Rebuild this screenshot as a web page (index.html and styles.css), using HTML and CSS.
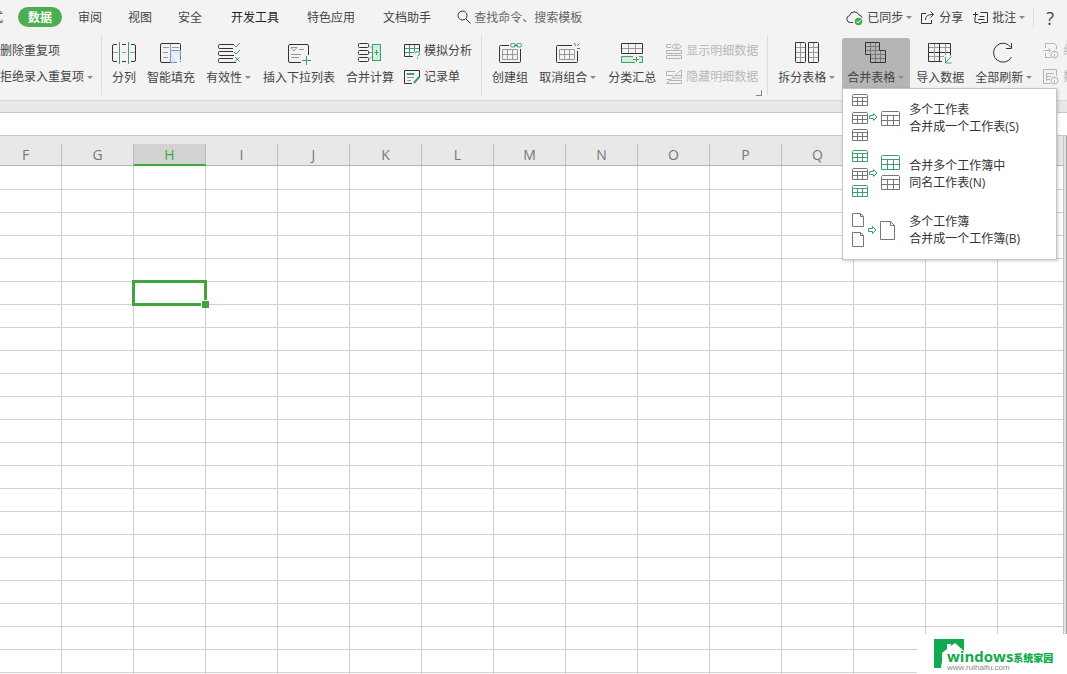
FILE: index.html
```html
<!DOCTYPE html>
<html lang="zh-CN">
<head>
<meta charset="utf-8">
<title>表格 - 数据</title>
<link rel="stylesheet" href="styles.css">
</head>
<body>
<svg class="defs" aria-hidden="true">
  <symbol id="grid-s" viewBox="0 0 16 12"><path d="M.5 1.500q0-1 1-1h13q1 0 1 1v10H.5zM.5 3.500h15M.5 7.500h15M5.500 3.500v8M10.500 3.500v8"/></symbol>
  <symbol id="grid-l" viewBox="0 0 19 15"><path d="M.5 1.500q0-1 1-1h16q1 0 1 1v13H.5zM.5 4.500h18M.5 9.500h18M6.500 4.500v10M12.500 4.500v10"/></symbol>
  <symbol id="arrow" viewBox="0 0 9 8"><path d="M.5 2.500h4v-2L8 4 4.500 7.500v-2h-4z"/></symbol>
</svg>
<div class="app">
  <header class="menubar">
    <nav class="tabs">
      <button class="tab">式</button>
      <button class="tab current">数据</button>
      <button class="tab">审阅</button>
      <button class="tab">视图</button>
      <button class="tab">安全</button>
      <button class="tab wide dev">开发工具</button>
      <button class="tab wide">特色应用</button>
      <button class="tab wide">文档助手</button>
    </nav>
    <label class="search">
      <svg width="14" height="14" viewBox="0 0 14 14"><circle cx="5.500" cy="5.500" r="4.500"/><path d="M9 9l4.500 4.500"/></svg>
      <input type="text" placeholder="查找命令、搜索模板" aria-label="查找命令">
    </label>
    <div class="account">
      <button class="link"><svg width="18" height="16" viewBox="0 0 18 16"><path d="M7 12.500H4.500A3.500 3.500 0 0 1 3.500 5.600 5 5 0 0 1 13 5a3.600 3.600 0 0 1 3 2.500"/><circle class="ok" cx="12.500" cy="11.500" r="3.800"/><path class="tick" d="M10.500 11.500l1.500 1.500 2.500-3"/></svg><span>已同步</span><i class="caret"></i></button>
      <button class="link share"><svg width="15" height="14" viewBox="0 0 15 14"><path d="M6 2.500H1.500v10h10V9M5.500 9C5.500 5 8 3.500 13 3.500M10.500.5l3 3-3 3"/></svg><span>分享</span></button>
      <button class="link"><svg width="16" height="14" viewBox="0 0 16 14"><path d="M7.500 1.500h7v10h-6l-1.500 1.500-1.500-1.500h-3.500V6M0 3.500h5M2.500 1v5M6.500 5.500h5M5 8.500h6.500"/></svg><span>批注</span><i class="caret"></i></button>
      <i class="divider"></i>
      <button class="help" aria-label="帮助">?</button>
    </div>
  </header>

  <div class="ribbon">
    <div class="stack first">
      <button class="small">删除重复项</button>
      <button class="small">拒绝录入重复项<i class="caret"></i></button>
    </div>
    <i class="rule"></i>
    <button class="large">
      <svg viewBox="0 0 24 24"><path d="M5 3.500H2q-1.500 0-1.500 1.500v14q0 1.500 1.500 1.500h3M19 3.500h3q1.500 0 1.500 1.500v14q0 1.500-1.500 1.500h-3M10 3.500h4M10 20.500h4"/><path class="thin" d="M1 11.500h5M10 11.500h4M18 11.500h5"/><path class="green" d="M7.500 1v22M16.500 1v22"/></svg>
      <span>分列</span>
    </button>
    <button class="large">
      <svg viewBox="0 0 24 24"><path d="M11.500 21.500H3q-1.500 0-1.500-1.500V4q0-1.500 1.500-1.500h17.500q1 0 1 1.500v5"/><path class="thin" d="M11.500 3v6M4 6.500h6M13 6.500h7M4 11.500h5M4 16.500h5"/><path class="bluefill" d="M11.500 9.500h10v8M18 21.500h-6.500v-12"/><path class="blue" d="M21.500 16v3M21.500 20v1"/></svg>
      <span>智能填充</span>
    </button>
    <button class="large">
      <svg viewBox="0 0 24 24"><path d="M17 3.500H2.500q-1 0-1 1v2q0 1 1 1H16M16 10.500H2.500q-1 0-1 1v2q0 1 1 1H17M16 17.500H2.500q-1 0-1 1v2q0 1 1 1H19"/><path class="green" d="M17 4l2 2 4-4M17 11l2 2 4-4M18 16l4.500 4.500M22.500 16L18 20.500"/></svg>
      <span>有效性<i class="caret"></i></span>
    </button>
    <button class="large">
      <svg viewBox="0 0 24 24"><path d="M14 21.500H3q-1.500 0-1.500-1.500V5q0-1.500 1.500-1.500h17q1.500 0 1.500 1.500v9"/><path class="thin" d="M4 6.500h6L7 10zM12 8.500h5M4 13.500h10M4 16.500h8"/><path class="green" d="M15 19.500h9M19.500 15v9"/></svg>
      <span>插入下拉列表</span>
    </button>
    <button class="large">
      <svg viewBox="0 0 24 24"><rect x=".5" y="2.500" width="10" height="4" rx="1"/><rect x=".5" y="9.500" width="10" height="4" rx="1"/><rect x=".5" y="16.500" width="10" height="4" rx="1"/><path class="thin" d="M11 4.500l3 3M11 11.500h3M11 18.500l3-3"/><rect class="mint" x="14.500" y="3.500" width="8" height="16"/><path class="green" d="M16.500 11.500h4M18.500 9v5"/></svg>
      <span>合并计算</span>
    </button>
    <div class="stack">
      <button class="small"><svg viewBox="0 0 16 16"><path d="M9 13.500H.5v-12h15v7"/><path class="green" d="M1 5.500h14M1 9.500h9M5.500 2v11M10.500 2v7M11.500 10.500q0-2 2-2t2 2-2 2.500M13.500 14.500v1"/></svg>模拟分析</button>
      <button class="small"><svg viewBox="0 0 16 16"><path d="M8 14.500H.5v-13h15v7"/><path class="green" d="M3 4.500h7v1H3z"/><path class="thin" d="M3 8.500h7M3 11.500h4"/><path class="green heavy" d="M15 8l-5 6"/></svg>记录单</button>
    </div>
    <i class="rule"></i>
    <button class="large">
      <svg viewBox="0 0 24 24"><path d="M11 4.500H2.500q-1 0-1 1v15q0 1 1 1h19q1 0 1-1V8"/><path class="thin" d="M4.500 8.500h15v10h-15zM4.500 13.500h15M9.500 8.500v10M14.500 8.500v10"/><rect class="green" x="12.500" y="2.500" width="5" height="3.500" rx="1.700"/><rect class="green" x="18.500" y="2.500" width="5" height="3.500" rx="1.700"/><path class="green" d="M16 4.500h4"/></svg>
      <span>创建组</span>
    </button>
    <button class="large">
      <svg viewBox="0 0 24 24"><path d="M16 4.500H1.500q-1 0-1 1v15q0 1 1 1h19q1 0 1-1V10"/><path class="thin" d="M3.500 8.500h15v10h-15zM3.500 13.500h15M8.500 8.500v10M13.500 8.500v10"/><path class="red" d="M18.500 2l1 3M23.500 2.500L21 5M21 7.500h3"/></svg>
      <span>取消组合<i class="caret"></i></span>
    </button>
    <button class="large">
      <svg viewBox="0 0 24 24"><path d="M1.500 2.500h21v10h-21z"/><path class="thin" d="M2 7.500h20M8.500 3v9M15.500 3v9"/><path class="mint" d="M13 15.500H1.500v6H15M19 15.500h3.500v6H19"/><path class="green" d="M13 18.500h6M16.500 16v5"/></svg>
      <span>分类汇总</span>
    </button>
    <div class="stack">
      <button class="small" disabled><svg viewBox="0 0 16 16"><path d="M5 1.500H.5M.5 1.500v3H5M.5 7.500h15v3H.5zM.5 12.500h15v3H.5zM5.500 3.500q5-5 10 0-5 5-10 0z"/><circle cx="10.500" cy="3.500" r="1"/></svg>显示明细数据</button>
      <button class="small" disabled><svg viewBox="0 0 16 16"><path d="M9 2.500H.5v4H7M.5 10.500H5M.5 14.500h15v-3H4M15.500 1v8H6M1 14L15 1M9 6.500h6"/></svg>隐藏明细数据</button>
    </div>
    <i class="rule corner"></i>
    <button class="large">
      <svg viewBox="0 0 24 24"><path d="M.5 1.500h9q1 0 1 1v18q0 1-1 1h-8q-1 0-1-1zM13.500 1.500h9q1 0 1 1v18q0 1-1 1h-9z"/><path class="thin" d="M1 6.500h9M1 11.500h9M1 16.500h9M5.500 2v19M14 6.500h9M14 11.500h9M14 16.500h9M18.500 2v19"/></svg>
      <span>拆分表格<i class="caret"></i></span>
    </button>
    <div class="dropdown">
      <button class="large open" aria-expanded="true">
        <svg viewBox="0 0 24 24"><path d="M1.500 1.500h14v8h6v12h-15v-8h-5z"/><path class="thin" d="M2 5.500h13M2 9.500h13M7 13.500h14M7 17.500h14M6.500 2v11M11.500 2v19M16.500 10v11"/></svg>
        <span>合并表格<i class="caret"></i></span>
      </button>
      <div class="menu">
        <button class="option">
          <svg width="56" height="56" viewBox="0 0 56 56"><use href="#grid-s" x="3" y="4" width="16" height="12"/><use href="#grid-s" x="3" y="22" width="16" height="12"/><use href="#grid-s" x="3" y="39" width="16" height="12"/><use class="green" href="#arrow" x="20" y="23" width="9" height="8"/><use href="#grid-l" x="32" y="21" width="19" height="15"/></svg>
          <span>多个工作表<br>合并成一个工作表(S)</span>
        </button>
        <button class="option">
          <svg width="56" height="56" viewBox="0 0 56 56"><use class="green" href="#grid-s" x="3" y="4" width="16" height="12"/><use href="#grid-s" x="3" y="22" width="16" height="12"/><use class="green" href="#grid-s" x="3" y="39" width="16" height="12"/><use class="green" href="#arrow" x="20" y="23" width="9" height="8"/><use class="green" href="#grid-l" x="32" y="9" width="19" height="15"/><use href="#grid-l" x="32" y="29" width="19" height="15"/></svg>
          <span>合并多个工作簿中<br>同名工作表(N)</span>
        </button>
        <button class="option">
          <svg width="56" height="56" viewBox="0 0 56 56"><path d="M3.500 11.500h8l3 3v10h-11zM11.500 11.500v3h3M3.500 30.500h8l3 3v11h-11zM11.500 30.500v3h3M31.500 19.500h10l4 4v14h-14zM41.500 19.500v4h4"/><use class="green" href="#arrow" x="19" y="24" width="9" height="8"/></svg>
          <span>多个工作簿<br>合并成一个工作簿(B)</span>
        </button>
      </div>
    </div>
    <button class="large">
      <svg viewBox="0 0 24 24"><path d="M14 20.500H.5v-18h22v12M.5 11.500h22M11.500 2.500v18"/><path class="thin" d="M1 6.500h10M12 6.500h10M1 15.500h10M12 15.500h4M6.500 3v17M17.500 3v11"/><path class="green" d="M23.500 15.500l-6 6M17.500 16v6h6"/></svg>
      <span>导入数据</span>
    </button>
    <button class="large">
      <svg viewBox="0 0 24 24"><path d="M19 6.500A9.500 9.500 0 1 0 19.500 16M19.500 2v5.500H14"/></svg>
      <span>全部刷新<i class="caret"></i></span>
    </button>
    <div class="stack">
      <button class="small" disabled><svg viewBox="0 0 16 16"><path d="M2.500 5V.5h9l2 2V6M2.500 10v4.500H8M.5 7.500h7M5.500 5.500l2 2-2 2"/><circle cx="11.500" cy="11.500" r="3.500"/><path d="M11.500 9v1M11.500 11v3"/></svg>编辑连接</button>
      <button class="small" disabled><svg viewBox="0 0 16 16"><path d="M8 14.500H.5V.5h13V7M3 4.500h8M3 7.500h5M3 10.500h4M3.500 4v8"/><circle cx="11.500" cy="11.500" r="3.500"/><path d="M11.500 9v1M11.500 11v3"/></svg>数据区域属性</button>
    </div>
  </div>

  <input class="formula" type="text" aria-label="编辑栏">

  <main class="sheet">
    <div class="cells">
      <table>
        <thead>
          <tr>
            <th class="partial"><span>F</span></th><th><span>G</span></th><th class="selected"><span>H</span></th><th><span>I</span></th><th><span>J</span></th><th><span>K</span></th><th><span>L</span></th><th><span>M</span></th><th><span>N</span></th><th><span>O</span></th><th><span>P</span></th><th><span>Q</span></th><th><span>R</span></th><th><span>S</span></th><th><span>T</span></th>
          </tr>
        </thead>
        <tbody id="rows"></tbody>
      </table>
    </div>
    <div class="scrollbar"></div>
  </main>

  <div class="watermark">
    <svg class="house" width="32" height="30" viewBox="0 0 32 30"><path fill="#12a950" d="M1 1h30v12l-9-8-4 3V6h-4v5l-5 4v9q-1 3-1 6H1z"/></svg>
    <div class="brand"><b>windows<small>系统家园</small></b><span>www.ruihaifu.com</span></div>
  </div>
</div>
<script src="sheet.js"></script>
</body>
</html>
```
FILE: styles.css
```css
* { box-sizing: border-box; }
body {
  margin: 0;
  font: 12px/18px "Open Sans", "Noto Sans CJK SC", sans-serif;
  color: #444;
}
button, input {
  font: inherit;
  color: inherit;
  border: 0;
  padding: 0;
  margin: 0;
  background: none;
  white-space: nowrap;
}
svg { display: block; flex: none; fill: none; stroke: #333; }
.defs { position: absolute; width: 0; height: 0; }
.green { stroke: #3f9e6b; }
.thin { stroke: #999; }
.heavy { stroke-width: 2; }
.blue { stroke: #4a80bd; }
.bluefill { stroke: #6c9bcb; fill: #dce9f7; }
.mint { stroke: #3f9e6b; fill: #d3eedd; }
.red { stroke: #d8435a; }

.app {
  position: relative;
  display: flex;
  flex-direction: column;
  height: 100vh;
  overflow: hidden;
  background: #e8e8e8;
}

.menubar {
  display: flex;
  align-items: center;
  height: 34px;
  flex: none;
  background: #f3f3f3;
}
.tabs { display: flex; align-items: center; margin-left: -22px; }
.tab { height: 20px; padding: 1px 13px 0; line-height: 19px; }
.tab.wide { padding: 1px 14px 0; }
.tab.dev { margin-left: 2px; color: #222; }
.tab.current {
  margin: 0 3px 0 2px;
  padding: 1px 10px 0;
  border-radius: 10px;
  background: #4cae4f;
  color: #fff;
  font-weight: bold;
}
.search { display: flex; align-items: center; gap: 3px; margin-left: 12px; flex: 1; }
.search input { flex: 1; min-width: 0; padding-top: 1px; outline: 0; }
.search input::placeholder { color: #666; opacity: 1; }
.account { display: flex; align-items: center; padding: 1px 13px 0 0; }
.link { display: flex; align-items: center; gap: 3px; margin-right: 8px; }
.link.share { margin-right: 10px; gap: 4px; }
.ok { fill: #46ad4d; stroke: none; }
.tick { stroke: #fff; }
.divider { width: 1px; height: 18px; background: #ddd; margin-right: 12px; }
.help { font-size: 18px; }

.caret {
  display: inline-block;
  flex: none;
  border: 3px solid transparent;
  border-top-color: #888;
  border-bottom: 0;
  margin: 0 1px 0 3px;
  vertical-align: 3px;
}
.link .caret { margin: 0; }

.ribbon {
  display: flex;
  align-items: center;
  gap: 1px;
  height: 67px;
  flex: none;
  padding: 0 0 8px;
  background: #f3f3f3;
  border-bottom: 1px solid #d6d6d6;
}
.ribbon > * { flex: none; }
.rule { width: 1px; height: 60px; margin: 4px 4px 0; background: #dedede; }
.corner { position: relative; }
.corner::before {
  content: "";
  position: absolute;
  right: 6px;
  bottom: -1px;
  width: 5px;
  height: 5px;
  border: solid #888;
  border-width: 0 1px 1px 0;
}
.large {
  display: flex;
  flex-direction: column;
  align-items: center;
  gap: 4px;
  height: 50px;
  padding: 3px 5px 1px;
}
.large svg { width: 24px; height: 24px; }
.open { background: #b5b5b5; border-radius: 3px 3px 0 0; }
.open .thin { stroke: #777; }
.stack { display: flex; flex-direction: column; padding: 2px 4px 0; }
.stack.first { padding: 2px 2px 0 0; }
.small { display: flex; align-items: center; gap: 4px; height: 26px; }
.small svg { width: 16px; height: 16px; }
.small .caret { margin: 0 1px 0 -1px; }
.small:disabled { color: #b8b8b8; }
.small:disabled svg { stroke: #b4b4b4; }

.dropdown { position: relative; }
.menu {
  position: absolute;
  z-index: 2;
  top: 100%;
  left: 0;
  width: 215px;
  padding: 1px 0;
  background: #fff;
  border: 1px solid #c4c4c4;
  box-shadow: 1px 1px 3px #0003;
}
.option {
  display: flex;
  align-items: center;
  gap: 4px;
  width: 100%;
  padding-left: 6px;
  line-height: 17px;
  text-align: left;
  color: #333;
}
.option svg { stroke: #777; }

.formula {
  flex: none;
  height: 24px;
  margin-top: 11px;
  padding: 0 8px;
  width: 100%;
  background: #fff;
  border: solid #c8c8c8;
  border-width: 1px 0;
  outline: 0;
}

.sheet { display: flex; flex: 1; min-height: 0; background: #fff; }
.cells { flex: 1; min-width: 0; overflow: hidden; }
table { table-layout: fixed; width: 1070px; border-collapse: separate; border-spacing: 0; }
th { width: 72px; height: 30px; padding: 8px 0 0; background: #e8e8e8; border-bottom: 1px solid #b4b4b4; }
th.partial { width: 62px; }
th span {
  display: block;
  height: 21px;
  font-size: 14px;
  font-weight: normal;
  line-height: 21px;
  color: #777;
  border-right: 1px solid #bcbcbc;
}
th.partial span { padding-right: 10px; }
th.selected { border-bottom: 2px solid #3faa3c; }
th.selected span { height: 20px; background: #d3d3d3; color: #3faa3c; }
td { height: 23px; padding: 0; border: solid #d0d0d0; border-width: 0 1px 1px 0; }
tr:first-child td { height: 24px; }
td.active { position: relative; }
td.active::before {
  content: "";
  position: absolute;
  inset: -2px;
  border: 3px solid #3fa53f;
}
td.active::after {
  content: "";
  position: absolute;
  right: -4px;
  bottom: -4px;
  width: 7px;
  height: 7px;
  background: #3fa53f;
  border: solid #fff;
  border-width: 1px 0 0 1px;
}
.scrollbar { width: 4px; background: #e4e4e4; border-left: 1px solid #c4c4c4; border-right: 1px solid #a0a0a0; }

.watermark {
  position: absolute;
  right: 0;
  bottom: 0;
  z-index: 1;
  display: flex;
  align-items: flex-start;
  width: 150px;
  height: 40px;
  padding: 4px 0 0 16px;
  background: #fff;
}
.house { stroke: none; }
.brand { margin-left: -18px; padding-top: 10px; white-space: nowrap; }
.brand b { display: block; font: bold 15px/16px "Open Sans", sans-serif; color: #12a950; }
.brand small { font: 900 10px/16px "Noto Sans CJK SC", sans-serif; }
.brand span { display: block; margin-top: -2px; font: 8px/8px "Liberation Sans", sans-serif; color: #888; }
```
FILE: sheet.js
```js
const rows = document.getElementById("rows");
const columns = 15;
for (let r = 0; r < 24; r++) {
  const row = rows.insertRow();
  for (let c = 0; c < columns; c++) {
    const cell = row.insertCell();
    if (r === 5 && c === 2) cell.className = "active";
  }
}
```
